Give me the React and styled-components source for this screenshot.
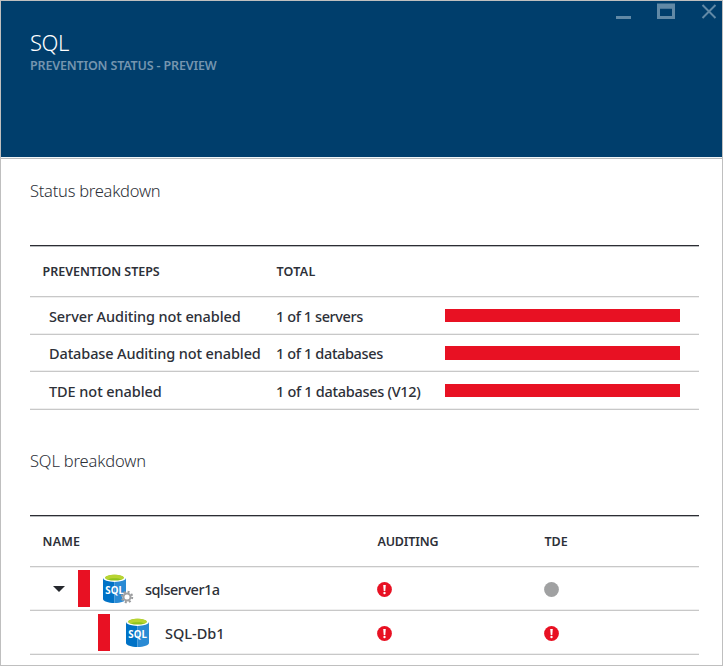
import React from "react";
import styled, { createGlobalStyle } from "styled-components";

const GlobalStyle = createGlobalStyle`
  * { box-sizing: border-box; }
  body { margin: 0; background: #fff; }
`;

const Blade = styled.main`
  width: 723px;
  height: 666px;
  overflow: hidden;
  border: 1px solid #bfbfbf;
  background: #fff;
  color: #2d3038;
  font-family: "Noto Sans", "Open Sans", sans-serif;
`;

const Header = styled.header`
  display: flex;
  justify-content: space-between;
  align-items: flex-start;
  height: 156px;
  padding-left: 29px;
  background: #003e6c;
`;

const HeaderRule = styled.div`
  height: 2px;
  border-top: 1px solid #f2f6f8;
  background: #b9bbbc;
`;

const Titles = styled.div`
  padding-top: 27px;
`;

const Title = styled.h1`
  margin: 0 0 2px;
  font-size: 22px;
  font-weight: 300;
  line-height: 28px;
  letter-spacing: -0.4px;
  color: #fff;
`;

const Subtitle = styled.h2`
  margin: 0;
  font-size: 12.5px;
  font-weight: 600;
  line-height: 16px;
  letter-spacing: -0.16px;
  color: #7595af;
`;

const WindowControls = styled.svg`
  width: 107px;
  height: 24px;
`;

const Section = styled.section`
  padding: 19px 23px 0 29px;
  height: 270px;
`;

const SectionTitle = styled.h3`
  margin: 0 0 42px;
  font-size: 16.5px;
  font-weight: 300;
  line-height: 25px;
  letter-spacing: ${(p) => p.$spacing}px;
`;

const Table = styled.div`
  border-top: 1px solid #2c2d33;
  box-shadow: inset 0 1px 0 #b8bbbd;
`;

const Row = styled.div`
  display: grid;
  grid-template-columns: ${(p) => p.$columns};
  align-items: center;
  height: ${(p) => p.$height}px;
  border-bottom: 1px solid #c8c8c8;
  box-shadow: inset 0 -1px 0 #efefef;
`;

const HeadRow = styled(Row)`
  padding-top: 2px;
  box-shadow: 0 1px 0 #efefef;
`;

const HeadCell = styled.div`
  padding-left: ${(p) => (p.$first ? 12.6 : 0.4)}px;
  font-size: 12.5px;
  font-weight: 600;
  line-height: 18px;
  letter-spacing: ${(p) => p.$spacing}px;
`;

const Label = styled.span`
  padding-left: ${(p) => p.$indent || 0}px;
  font-size: 14.5px;
  font-weight: 500;
  line-height: 20px;
  letter-spacing: ${(p) => p.$spacing}px;
  white-space: nowrap;
`;

const Bar = styled.div`
  width: 235px;
  height: ${(p) => p.$height}px;
  background: #e81123;
`;

const NameCell = styled.div`
  display: flex;
  align-items: center;
  padding-left: ${(p) => p.$indent}px;
`;

const Caret = styled.svg`
  width: 14px;
  height: 8px;
  margin-right: 12px;
`;

const Marker = styled.div`
  width: 12px;
  height: 37px;
  margin-right: ${(p) => p.$gap}px;
  background: #e81123;
`;

const DbSvg = styled.svg`
  width: 32px;
  height: 32px;
  margin-right: ${(p) => p.$gap}px;
`;

const StatusSvg = styled.svg`
  display: block;
  width: 15px;
  height: 15px;
  margin-top: 2px;
`;

const STEP_COLUMNS = "246px 169px 1fr";
const DB_COLUMNS = "347px 167px 1fr";

const steps = [
  { name: "Server Auditing not enabled", ns: -0.1, total: "1 of 1 servers", ts: -0.41, row: 38, bar: 13 },
  { name: "Database Auditing not enabled", ns: -0.12, total: "1 of 1 databases", ts: -0.37, row: 37, bar: 14 },
  { name: "TDE not enabled", ns: -0.07, total: "1 of 1 databases (V12)", ts: -0.3, row: 38, bar: 13 },
];

function DatabaseIcon({ gap, gear }) {
  return (
    <DbSvg viewBox="0 0 32 32" $gap={gap}>
      <path d="M1 5v21c0 2.2 5.100 4 11.500 4V5z" fill="#0072c6" />
      <path d="M12.500 5v25C18.900 30 24 28.200 24 26V5z" fill="#2a8ad4" />
      <ellipse cx="12.500" cy="5" rx="11.500" ry="3.900" fill="#fff" />
      <ellipse cx="12.500" cy="4.700" rx="9.300" ry="2.900" fill="#8fc31f" />
      <path d="M3.200 4.700c0-1.500 4.200-2.900 9.300-2.900s9.300 1.400 9.300 2.900c0 .7-.9 1.300-2.300 1.800-1.500-.8-4-1.300-7-1.300s-5.500.5-7 1.300c-1.400-.5-2.300-1.100-2.300-1.800z" fill="#b8d432" />
      <text x="12.600" y="21" textAnchor="middle" fontSize="10.500" fontWeight="700" fill="#fff" textLength="18.500" lengthAdjust="spacingAndGlyphs">
        SQL
      </text>
      {gear && (
        <g transform="translate(25 24)">
          <circle r="4.600" fill="#fff" />
          <circle r="5.200" fill="none" stroke="#999b9d" strokeWidth="2" strokeDasharray="2 2.084" />
          <circle r="3.500" fill="none" stroke="#a0a1a2" strokeWidth="2" />
        </g>
      )}
    </DbSvg>
  );
}

function StatusIcon({ alert }) {
  return (
    <StatusSvg viewBox="0 0 15 15">
      <circle cx="7.500" cy="7.500" r="7.400" fill={alert ? "#e81123" : "#a0a1a2"} />
      {alert && (
        <>
          <path d="M6.200 3h2.600l-.5 6H6.700z" fill="#fff" />
          <circle cx="7.500" cy="11" r="1.200" fill="#fff" />
        </>
      )}
    </StatusSvg>
  );
}

export default function App() {
  return (
    <>
      <GlobalStyle />
      <Blade>
        <Header>
          <Titles>
            <Title>SQL</Title>
            <Subtitle>PREVENTION STATUS - PREVIEW</Subtitle>
          </Titles>
          <WindowControls viewBox="0 0 107 24">
            <path d="M1 15h15v3H1z" fill="#6189a6" />
            <path d="M42 2.500h18V18H42zM45 7.700V15h12V7.700z" fill="#6189a6" fillRule="evenodd" />
            <path d="M87.500 4l13 13M100.500 4l-13 13" stroke="#6189a6" strokeWidth="2" />
          </WindowControls>
        </Header>
        <HeaderRule />

        <Section>
          <SectionTitle $spacing={-0.25}>Status breakdown</SectionTitle>
          <Table>
            <HeadRow $columns={STEP_COLUMNS} $height={51}>
              <HeadCell $first $spacing={-0.04}>PREVENTION STEPS</HeadCell>
              <HeadCell $spacing={0.3}>TOTAL</HeadCell>
            </HeadRow>
            {steps.map((s) => (
              <Row key={s.name} $columns={STEP_COLUMNS} $height={s.row}>
                <Label $indent={19} $spacing={s.ns}>{s.name}</Label>
                <Label $spacing={s.ts}>{s.total}</Label>
                <Bar $height={s.bar} />
              </Row>
            ))}
          </Table>
        </Section>

        <Section>
          <SectionTitle $spacing={-0.15}>SQL breakdown</SectionTitle>
          <Table>
            <HeadRow $columns={DB_COLUMNS} $height={51}>
              <HeadCell $first $spacing={0.2}>NAME</HeadCell>
              <HeadCell $spacing={-0.15}>AUDITING</HeadCell>
              <HeadCell $spacing={0}>TDE</HeadCell>
            </HeadRow>
            <Row $columns={DB_COLUMNS} $height={44}>
              <NameCell $indent={22}>
                <Caret viewBox="0 0 14 8">
                  <path d="M1 1h12L7 7z" fill="#25282d" />
                </Caret>
                <Marker $gap={12} />
                <DatabaseIcon gap={11} gear />
                <Label $spacing={-0.5}>sqlserver1a</Label>
              </NameCell>
              <StatusIcon alert />
              <StatusIcon />
            </Row>
            <Row $columns={DB_COLUMNS} $height={44}>
              <NameCell $indent={68}>
                <Marker $gap={15} />
                <DatabaseIcon gap={8} />
                <Label $spacing={0}>SQL-Db1</Label>
              </NameCell>
              <StatusIcon alert />
              <StatusIcon alert />
            </Row>
          </Table>
        </Section>
      </Blade>
    </>
  );
}
